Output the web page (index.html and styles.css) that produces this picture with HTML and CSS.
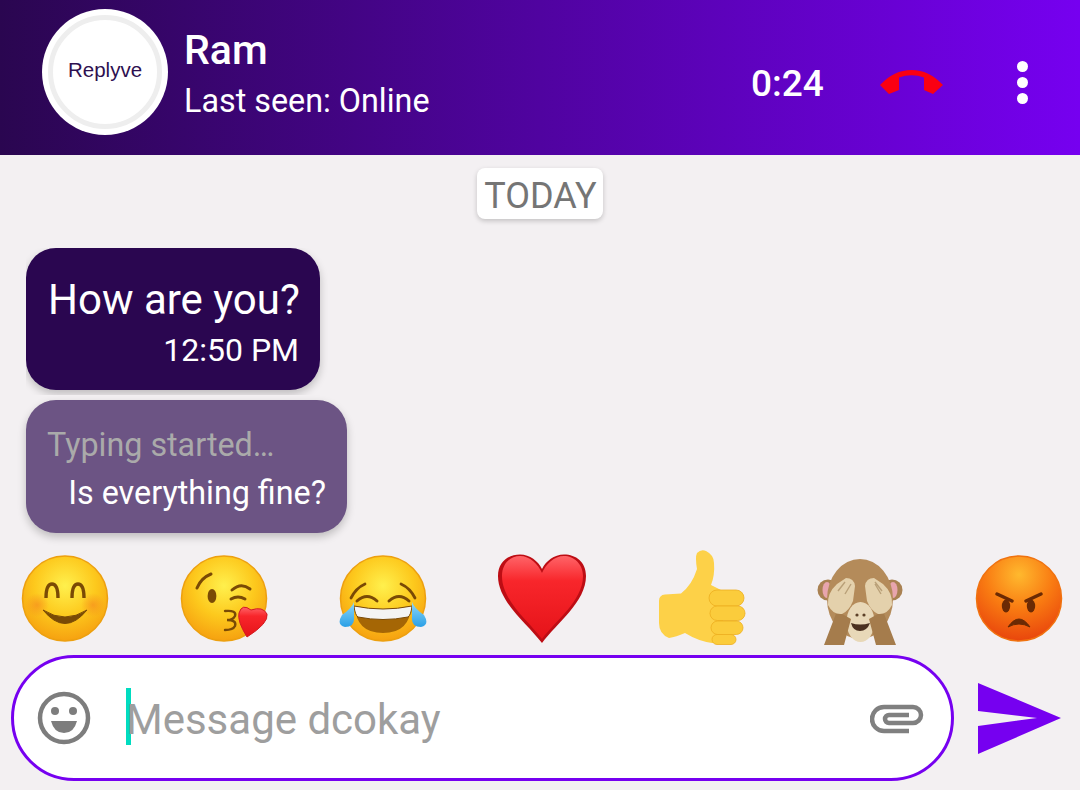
FILE: index.html
```html
<!DOCTYPE html>
<html lang="en">
<head>
    <meta charset="UTF-8">
    <meta name="viewport" content="width=device-width, initial-scale=1.0">
    <title>Replyve Chat</title>
    <link rel="stylesheet" href="styles.css">
</head>
<body>

    <div id="app">

        <!-- Header Section -->
        <header class="chat-header">
            <div class="avatar">
                <div class="avatar-ring">Replyve</div>
            </div>
            <div class="contact">
                <div class="contact-name">Ram</div>
                <div class="contact-status">Last seen: Online</div>
            </div>
            <div class="call-controls">
                <span class="call-time">0:24</span>
                <svg class="hangup-icon" width="63" height="24" viewBox="0 0 63 24">
                    <path fill="#fb0012" d="M0 15Q14 0 31.5 0T63 15L53 24L44 20V7.5Q31.5 3 19 7.5V20L9 24Z"/>
                </svg>
                <div class="menu-dots"><i></i><i></i><i></i></div>
            </div>
        </header>

        <!-- Message list -->
        <main class="messages">
            <div class="date-chip">TODAY</div>
            <div class="bubble-clip">
                <div class="bubble bubble-dark">
                    <div class="bubble-text">How are you?</div>
                    <div class="bubble-time">12:50 PM</div>
                </div>
            </div>
            <div class="bubble bubble-typing">
                <div class="typing-label">Typing started…</div>
                <div class="typing-text">Is everything fine?</div>
            </div>
        </main>

        <!-- Quick emoji row -->
        <div class="emoji-row">
            <!-- smile -->
            <svg class="emoji" viewBox="0 0 90 96">
                <circle cx="45" cy="49.5" r="42.5" fill="url(#faceGrad)" stroke="#eda00f" stroke-width="1.5"/>
                <circle cx="17" cy="56" r="12" fill="url(#blush)"/>
                <circle cx="73" cy="56" r="12" fill="url(#blush)"/>
                <path d="M26 49Q26 35 32 35T38 49M52 49Q52 35 58 35T64 49" fill="none" stroke="#7a4a05" stroke-width="3.4"/>
                <path d="M23 61Q45 75 67 61Q45 88 23 61Z" fill="#7a4a05" stroke="#7a4a05" stroke-linejoin="round"/>
            </svg>
            <!-- kiss -->
            <svg class="emoji" viewBox="0 0 90 96">
                <circle cx="45" cy="49.5" r="42.5" fill="url(#faceGrad)" stroke="#eda00f" stroke-width="1.5"/>
                <path d="M18 39Q22 29 32 25" fill="none" stroke="#7a4a05" stroke-width="3" stroke-linecap="round"/>
                <ellipse cx="33" cy="47" rx="4.4" ry="7" fill="#7a4a05"/>
                <path d="M53 41Q62 33 71 40" fill="none" stroke="#7a4a05" stroke-width="3" stroke-linecap="round"/>
                <path d="M52 50Q59 46 66 50" fill="none" stroke="#7a4a05" stroke-width="3" stroke-linecap="round"/>
                <path d="M46 62Q58 61 56 67Q54 71 48 71Q58 71 56 77Q54 81 46 81" fill="none" stroke="#7a4a05" stroke-width="2.4" stroke-linecap="round"/>
                <path d="M68 88Q58 72 60 64Q63 54 72 61Q84 57 88 65Q90 74 68 88Z" fill="url(#heartGrad)" stroke="#d21b22"/>
            </svg>
            <!-- tears of joy -->
            <svg class="emoji" viewBox="0 0 90 96">
                <circle cx="45" cy="49.5" r="42.5" fill="url(#faceGrad)" stroke="#eda00f" stroke-width="1.5"/>
                <path d="M13 49Q18 39 27 35M77 49Q72 39 63 35" fill="none" stroke="#7a4a05" stroke-width="2.8" stroke-linecap="round"/>
                <path d="M19 52Q29 43 39 52M51 52Q61 43 71 52" fill="none" stroke="#7a4a05" stroke-width="3" stroke-linecap="round"/>
                <path d="M17 57Q45 63 73 57Q72 84 45 84T17 57Z" fill="#a56605"/>
                <path d="M16 57Q45 63 74 57Q73 66 70 68Q45 73 20 68Q17 66 16 57Z" fill="#f4f4f4" stroke="#7a4a05"/>
                <path d="M16 53Q14 59 4 66Q-2 76 7 78Q17 78 16 68Z" fill="url(#tearGrad)"/>
                <path d="M74 53Q76 59 86 66Q92 76 83 78Q73 78 74 68Z" fill="url(#tearGrad)"/>
            </svg>
            <!-- heart -->
            <svg class="emoji" viewBox="0 0 90 96">
                <path d="M45 94C30 74 1 53 1 27C1 13 11 5.5 23 5.5C33 5.5 41 12 45 20C49 12 57 5.5 67 5.5C79 5.5 89 13 89 27C89 53 60 74 45 94Z" fill="#bd0d14"/>
                <path d="M45 90C32 72 5 52 5 27C5 15 13 7 23 7C33 7 41 15 45 24C49 15 57 7 67 7C77 7 86 15 86 27C86 52 58 72 45 90Z" fill="url(#heartGrad)"/>
            </svg>
            <!-- thumbs up -->
            <svg class="emoji" viewBox="0 0 90 96">
                <path d="M3 52Q3 46 9 45.5L25 44.5Q36 36 41 20Q39 8 41 4Q45 0 50 2Q58 6 58 14Q59 26 55 36L67 42V94H56Q42 92 29 84Q20 88 13 89Q3 85 3 74Z" fill="#fdd148"/>
                <g fill="#fbcc3c" stroke="#eeae1f" stroke-width="0.8">
                    <rect x="53" y="41" width="35" height="16" rx="8"/>
                    <rect x="54" y="57" width="35" height="14.5" rx="7.2"/>
                    <rect x="55" y="72" width="32" height="13.5" rx="6.7"/>
                    <rect x="56" y="85.5" width="24" height="10" rx="5"/>
                </g>
            </svg>
            <!-- see no evil monkey -->
            <svg class="emoji" viewBox="0 0 90 96">
                <circle cx="13" cy="41" r="10.5" fill="#a98152"/>
                <circle cx="77" cy="41" r="10.5" fill="#a98152"/>
                <ellipse cx="12" cy="41" rx="4.5" ry="8" fill="#e8a5ad"/>
                <ellipse cx="78" cy="41" rx="4.5" ry="8" fill="#e8a5ad"/>
                <ellipse cx="45" cy="50" rx="33" ry="40" fill="#b48b5a"/>
                <ellipse cx="45.5" cy="73" rx="14" ry="20" fill="#e8d8b8"/>
                <circle cx="42" cy="66" r="1.6" fill="#5c4028"/>
                <circle cx="49" cy="66" r="1.6" fill="#5c4028"/>
                <path d="M36 74Q45 77 55 74Q52 82 45 82T36 74Z" fill="#4a3020"/>
                <path d="M22 62L36 70L29 96H9ZM68 62L54 70L61 96H81Z" fill="#a57c4c"/>
                <path d="M13 56Q12 44 22 35L31 29Q39 29 40 37L38 52Q34 62 27 65Q18 66 13 56ZM77 56Q78 44 68 35L59 29Q51 29 50 37L52 52Q56 62 63 65Q72 66 77 56Z" fill="#e4d1ac"/>
                <path d="M23 42L30 33M30 45L36 35M60 35L66 45M67 42L60 33" stroke="#b9a078" stroke-width="1.4" fill="none"/>
            </svg>
            <!-- angry -->
            <svg class="emoji" viewBox="0 0 90 96">
                <circle cx="45" cy="49.5" r="42.5" fill="url(#angryGrad)" stroke="#f0720f" stroke-width="1.5"/>
                <path d="M23 45L38 52M67 45L52 52" stroke="#6b2a04" stroke-width="3.4" stroke-linecap="round"/>
                <ellipse cx="32" cy="57" rx="4.2" ry="6.5" fill="#6b2a04"/>
                <ellipse cx="57" cy="57" rx="4.2" ry="6.5" fill="#6b2a04"/>
                <path d="M34 78Q45 62 56 78Q45 72 34 78Z" fill="#6b2a04" stroke="#6b2a04"/>
            </svg>
        </div>

        <!-- Message input bar -->
        <div class="input-row">
            <div class="input-box">
                <svg class="smile-icon" width="54" height="54" viewBox="0 0 54 54">
                    <circle cx="27" cy="27" r="24" fill="none" stroke="#7d7d7d" stroke-width="4.5"/>
                    <circle cx="18" cy="20" r="4" fill="#7d7d7d"/>
                    <circle cx="36" cy="20" r="4" fill="#7d7d7d"/>
                    <path d="M14 30H40Q37 42 27 42T14 30Z" fill="#7d7d7d"/>
                </svg>
                <span class="caret"></span>
                <span class="placeholder">Message dcokay</span>
                <svg class="clip-icon" width="54" height="30" viewBox="0 0 54 30">
                    <path d="M39 27H14A11.5 11.5 0 0 1 14 3H43A8 8 0 0 1 43 19H19A4 4 0 0 1 19 11H39" fill="none" stroke="#808080" stroke-width="4.5"/>
                </svg>
            </div>
            <svg class="send-icon" width="84" height="72" viewBox="0 0 84 72">
                <path fill="#7600f0" d="M0 0L83 35L0 71V43L59 35L0 28Z"/>
            </svg>
        </div>
    </div>

    <!-- Shared emoji gradients -->
    <svg class="emoji-defs" width="0" height="0">
        <defs>
            <radialGradient id="faceGrad" cx="50%" cy="35%" r="65%">
                <stop offset="0" stop-color="#fff04d"/>
                <stop offset="0.55" stop-color="#fdc91d"/>
                <stop offset="1" stop-color="#f6a110"/>
            </radialGradient>
            <radialGradient id="blush">
                <stop offset="0" stop-color="#f58a1f" stop-opacity="0.65"/>
                <stop offset="1" stop-color="#f58a1f" stop-opacity="0"/>
            </radialGradient>
            <radialGradient id="angryGrad" cx="50%" cy="22%" r="80%">
                <stop offset="0" stop-color="#ffb92e"/>
                <stop offset="0.5" stop-color="#f97b12"/>
                <stop offset="1" stop-color="#e8430c"/>
            </radialGradient>
            <linearGradient id="heartGrad" x1="0" y1="0" x2="0" y2="1">
                <stop offset="0" stop-color="#ff6468"/>
                <stop offset="0.3" stop-color="#f8262b"/>
                <stop offset="1" stop-color="#e51319"/>
            </linearGradient>
            <linearGradient id="tearGrad" x1="0" y1="0" x2="0" y2="1">
                <stop offset="0" stop-color="#8ed8f8"/>
                <stop offset="1" stop-color="#2a9fe6"/>
            </linearGradient>
        </defs>
    </svg>

</body>
</html>
```

FILE: styles.css
```css
/* General styles */
body {
    font-family: Roboto, Arial, sans-serif;
    margin: 0;
    background-color: #f3f0f2;
    overflow: hidden;
}

#app {
    display: flex;
    flex-direction: column;
    width: 1080px;
    height: 790px;
}

/* Header bar */
.chat-header {
    display: flex;
    align-items: flex-start;
    height: 155px;
    box-sizing: border-box;
    padding: 9px 0 0 42px;
    color: white;
    background: linear-gradient(to right, #2a0650, #7600f0);
}

.avatar {
    width: 126px;
    height: 126px;
    box-sizing: border-box;
    padding: 6px;
    border-radius: 50%;
    background-color: white;
}

.avatar-ring {
    display: flex;
    align-items: center;
    justify-content: center;
    height: 100%;
    box-sizing: border-box;
    padding-bottom: 4px;
    border: 5px solid #eeeeee;
    border-radius: 50%;
    font-family: "Liberation Sans", Arial, sans-serif;
    font-size: 20.5px;
    color: #2e1050;
}

.contact {
    margin: 17px 0 0 16px;
}

.contact-name {
    font-size: 41px;
    font-weight: 500;
    line-height: 48px;
}

.contact-status {
    font-size: 32.3px;
    line-height: 54px;
}

.call-controls {
    display: flex;
    align-items: center;
    height: 40px;
    margin: 53px 0 0 auto;
    padding-right: 52px;
}

.call-time {
    width: 129px;
    margin-top: 3px;
    font-size: 37px;
    font-weight: 500;
}

.hangup-icon {
    margin-right: 74px;
}

.menu-dots {
    display: flex;
    flex-direction: column;
    gap: 5px;
}

.menu-dots i {
    display: block;
    width: 11px;
    height: 11px;
    border-radius: 50%;
    background-color: white;
}

/* Message list */
.messages {
    flex: 1;
    display: flex;
    flex-direction: column;
    align-items: flex-start;
    padding: 13px 0 0 26px;
}

.date-chip {
    align-self: center;
    margin-left: -26px;
    padding: 0 6px 0 7px;
    height: 51px;
    line-height: 57px;
    font-size: 36px;
    color: #757575;
    background-color: white;
    border-radius: 8px;
    box-shadow: 0 2px 5px rgba(0, 0, 0, 0.2);
}

.bubble {
    border-radius: 30px;
    color: white;
    box-shadow: 0 4px 9px rgba(0, 0, 0, 0.22);
    box-sizing: border-box;
}

/* keeps the first bubble's shadow cut off flat, like the reference */
.bubble-clip {
    margin-top: 29px;
    padding: 0 8px 5px 0;
    overflow: hidden;
}

.bubble-dark {
    width: 294px;
    height: 142px;
    padding: 26px 21px 0 22px;
    background-color: #2a0650;
    text-align: right;
    white-space: nowrap;
}

.bubble-text {
    font-size: 42px;
    line-height: 52px;
    text-align: left;
}

.bubble-time {
    font-size: 32px;
    line-height: 48px;
}

.bubble-typing {
    width: 321px;
    height: 133px;
    margin-top: 5px;
    padding: 21px 21px 0;
    background-color: #6c5484;
    font-size: 32.3px;
    line-height: 48px;
}

.typing-label {
    color: #aaaaaa;
}

.typing-text {
    text-align: right;
}

/* Quick emoji row */
.emoji-row {
    display: flex;
    justify-content: space-between;
    height: 96px;
    padding: 0 16px 0 20px;
}

.emoji {
    width: 90px;
    height: 96px;
}

/* Input bar */
.input-row {
    display: flex;
    align-items: center;
    height: 126px;
    margin: 10px 0 9px 11px;
}

.input-box {
    display: flex;
    align-items: center;
    width: 943px;
    height: 126px;
    box-sizing: border-box;
    padding: 0 27px 0 23px;
    background-color: white;
    border: 3px solid #7600f0;
    border-radius: 63px;
}

.smile-icon {
    margin-right: 35px;
}

.caret {
    width: 5px;
    height: 57px;
    margin: -3px -5px 0 0;
    background-color: #00dcc0;
}

.placeholder {
    flex: 1;
    margin-top: 2px;
    font-size: 42px;
    color: #9e9e9e;
}

.clip-icon {
    margin-top: 2px;
}

.send-icon {
    margin: 1px 0 0 24px;
}

.emoji-defs {
    display: block;
}
```
